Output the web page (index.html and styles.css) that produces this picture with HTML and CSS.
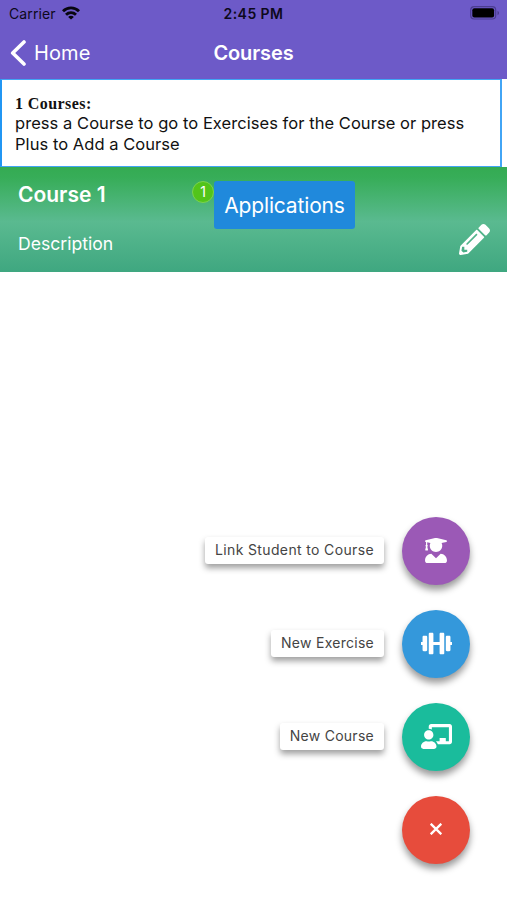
FILE: index.html
```html
<!DOCTYPE html>
<html lang="en">
<head>
<meta charset="utf-8">
<title>Courses</title>
<link rel="stylesheet" href="styles.css">
</head>
<body>
<header class="header">
  <div class="status">
    <div class="carrier"><span class="carrier-name">Carrier</span>
      <svg class="wifi" width="18" height="14" viewBox="0 0 18 14" fill="none" stroke="#08060f" stroke-width="2.900"><path d="M1 5.200C5.600.8 12.400.8 17 5.200M4 8.700c2.900-2.700 7.100-2.700 10 0"/><path d="M9 13.500 6.100 10.900c1.600-1.500 4.200-1.500 5.800 0z" fill="#08060f" stroke="none"/></svg>
    </div>
    <span class="time">2:45 PM</span>
    <svg class="battery" width="30" height="14" viewBox="0 0 30 14"><rect x=".7" y=".7" width="25" height="12.300" rx="3.500" fill="none" stroke="#4b3d91" stroke-width="1.200"/><rect x="2.300" y="2.300" width="21.800" height="9.200" rx="2" fill="#000"/><path d="M27.500 4.700c2 .8 2 3.700 0 4.500z" fill="#4b3d91"/></svg>
  </div>
  <nav class="nav">
    <a class="back"><svg width="16" height="26" viewBox="0 0 16 26" fill="none" stroke="#fff" stroke-width="3.600" stroke-linecap="round" stroke-linejoin="round"><path d="M14 2 2.700 13 14 24"/></svg><span class="home">Home</span></a>
    <h1 class="title">Courses</h1>
  </nav>
</header>
<section class="notice">
  <div class="count">1 Courses:</div>
  <div class="hint">press a Course to go to Exercises for the Course or press<br>Plus to Add a Course</div>
</section>
<article class="course">
  <div class="course-info">
    <h2 class="course-name">Course 1</h2>
    <p class="course-desc">Description</p>
  </div>
  <span class="badge">1</span>
  <button class="apps"><span>Applications</span></button>
  <svg class="pencil" width="31" height="31" viewBox="0 0 512 512" fill="#fff"><path d="M497.900 142.100l-46.100 46.100c-4.700 4.700-12.300 4.700-17 0l-111-111c-4.700-4.700-4.700-12.300 0-17l46.100-46.100c18.700-18.700 49.100-18.700 67.900 0l60.100 60.100c18.800 18.700 18.800 49.100 0 67.900zM284.200 99.800L21.600 362.400.4 483.900c-2.900 16.400 11.400 30.600 27.800 27.800l121.500-21.300 262.600-262.600c4.700-4.700 4.700-12.300 0-17l-111-111c-4.800-4.700-12.400-4.700-17.100 0zM124.100 339.900c-5.500-5.500-5.500-14.300 0-19.800l154-154c5.500-5.500 14.300-5.500 19.800 0s5.500 14.300 0 19.800l-154 154c-5.500 5.500-14.300 5.500-19.800 0zM88 424h48v36.300l-64.500 11.300-31.100-31.100L51.700 376H88v48z"/></svg>
</article>
<main class="actions">
  <div class="action"><span class="label link">Link Student to Course</span>
    <button class="fab purple"><svg width="22" height="25" viewBox="0 0 448 512" fill="#fff"><path d="M319.400 320.600L224 416l-95.400-95.400C57.100 323.700 0 382.200 0 454.400v9.600c0 26.500 21.500 48 48 48h352c26.500 0 48-21.500 48-48v-9.600c0-72.200-57.100-130.700-128.600-133.800zM13.600 79.800l6.400 1.500v58.400c-7 4.200-12 11.500-12 20.300 0 8.400 4.600 15.400 11.100 19.700L3.500 242c-1.700 6.900 2.100 14 7.600 14h41.800c5.500 0 9.300-7.100 7.600-14l-15.600-62.300C51.400 175.400 56 168.400 56 160c0-8.800-5-16.100-12-20.300V87.100l66 15.900c-8.600 17.200-14 36.400-14 57 0 70.700 57.300 128 128 128s128-57.300 128-128c0-20.600-5.300-39.800-14-57l96.300-23.200c18.200-4.400 18.200-27.100 0-31.500l-190.400-46c-13-3.100-26.700-3.100-39.700 0L13.600 48.200c-18.100 4.400-18.100 27.200 0 31.600z"/></svg></button></div>
  <div class="action"><span class="label">New Exercise</span>
    <button class="fab blue"><svg width="31" height="25" viewBox="0 0 640 512" fill="#fff"><path d="M104 96H56c-13.300 0-24 10.700-24 24v104H8c-4.400 0-8 3.600-8 8v48c0 4.400 3.600 8 8 8h24v104c0 13.300 10.700 24 24 24h48c13.300 0 24-10.700 24-24V120c0-13.300-10.700-24-24-24zm528 128h-24V120c0-13.300-10.700-24-24-24h-48c-13.300 0-24 10.700-24 24v272c0 13.300 10.700 24 24 24h48c13.300 0 24-10.700 24-24V288h24c4.400 0 8-3.600 8-8v-48c0-4.400-3.600-8-8-8zM456 32h-48c-13.300 0-24 10.700-24 24v168H256V56c0-13.300-10.700-24-24-24h-48c-13.300 0-24 10.700-24 24v400c0 13.300 10.700 24 24 24h48c13.300 0 24-10.700 24-24V288h128v168c0 13.300 10.700 24 24 24h48c13.300 0 24-10.700 24-24V56c0-13.300-10.700-24-24-24z"/></svg></button></div>
  <div class="action"><span class="label">New Course</span>
    <button class="fab teal"><svg width="31" height="25" viewBox="0 0 640 512" fill="#fff"><path d="M208 352c-2.400 0-4.800.4-7.100 1.100C188 357.300 174.400 360 160 360c-14.400 0-28-2.700-41-6.900-2.300-.7-4.600-1.100-7-1.100C49.900 352-.3 402.500 0 464.600.1 490.900 21.700 512 48 512h224c26.300 0 47.900-21.100 48-47.400.3-62.100-49.900-112.600-112-112.600zm-48-32c53 0 96-43 96-96s-43-96-96-96-96 43-96 96 43 96 96 96zM592 0H208c-26.500 0-48 22.300-48 49.600V96c23.400 0 45.100 6.800 64 17.800V64h352v288h-64v-64H384v64h-76.200c19.100 16.700 33.100 38.800 39.700 64H592c26.500 0 48-22.300 48-49.600V49.600C640 22.300 618.500 0 592 0z"/></svg></button></div>
  <div class="action"><button class="fab red"><svg width="12" height="12" viewBox="0 0 12 12" stroke="#fff" stroke-width="2.300"><path d="m.7.7 10.600 10.600M11.300.7.7 11.300"/></svg></button></div>
</main>
</body>
</html>
```

FILE: styles.css
```css
* { box-sizing: border-box; }
body { margin: 0; height: 900px; background: #fff; font-family: Inter, "Liberation Sans", sans-serif; overflow: hidden; display: flex; flex-direction: column; }
h1, h2, p { margin: 0; }
button { border: 0; padding: 0; font-family: inherit; }
svg { display: block; flex: none; }
span { white-space: nowrap; }
.header { height: 79px; background: #6d5ac8; }
.status { height: 27px; display: grid; grid-template-columns: 1fr auto 1fr; align-items: center; padding: 0 7px 0 9px; color: #0d091b; }
.carrier { display: flex; align-items: center; gap: 6px; font-size: 14px; letter-spacing: .1px; }
.wifi { margin-top: -2px; }
.time { font-size: 14px; font-weight: 600; letter-spacing: .45px; margin-left: -2px; }
.battery { justify-self: end; margin-top: -1px; }
.nav { height: 52px; display: grid; grid-template-columns: 1fr auto 1fr; align-items: center; padding: 0 10px; color: #fff; }
.back { display: flex; align-items: center; gap: 8px; }
.home { font-size: 20px; letter-spacing: .1px; }
.title { font-size: 20px; font-weight: 600; letter-spacing: -.1px; }
.notice { width: 502px; height: 88px; border: 1px solid #42a5f5; border-left: 2px solid #2196f3; border-right-width: 2px; padding: 14px 0 0 13px; color: #111; }
.count { font: bold 16px/19px "Liberation Serif", serif; letter-spacing: .42px; }
.hint { font-size: 16.5px; line-height: 21px; letter-spacing: .05px; white-space: nowrap; }
.course { height: 105px; display: flex; align-items: flex-start; padding: 14px 17px 0 18px; background: linear-gradient(#34ab52 0%, #37ad58 10%, #5aba90 52%, #3fa780 100%); color: #fff; }
.course-info { width: 174px; }
.course-name { font-size: 21px; line-height: 28px; font-weight: 600; }
.course-desc { font-size: 17.6px; line-height: 24px; margin-top: 23px; }
.badge { width: 22px; height: 22px; border-radius: 50%; background: #52c41a; border: 1px solid #7bd34e; text-align: center; font-size: 14px; line-height: 20px; }
.apps { width: 141px; height: 48px; border-radius: 3px; background: #2089dc; color: #fff; font-size: 21px; letter-spacing: -.15px; }
.pencil { margin: 43px 0 0 auto; }
.actions { margin-top: 244.5px; padding-right: 37px; display: flex; flex-direction: column; gap: 25px; }
.action { height: 68px; display: flex; align-items: center; justify-content: flex-end; gap: 18px; }
.label { height: 27px; padding: 0 10px; border-radius: 3px; background: #fff; box-shadow: 0 4px 6px rgba(0,0,0,.38); color: #444; font-size: 14px; line-height: 26px; letter-spacing: .27px; }
.link { letter-spacing: .36px; }
.fab { width: 68px; height: 68px; padding-bottom: 1px; border-radius: 50%; display: flex; align-items: center; justify-content: center; box-shadow: 0 5px 7px rgba(0,0,0,.4); }
.purple { background: #9b59b6; }
.blue { background: #3498db; }
.teal { background: #1abc9c; }
.red { background: #e74c3c; }
```
